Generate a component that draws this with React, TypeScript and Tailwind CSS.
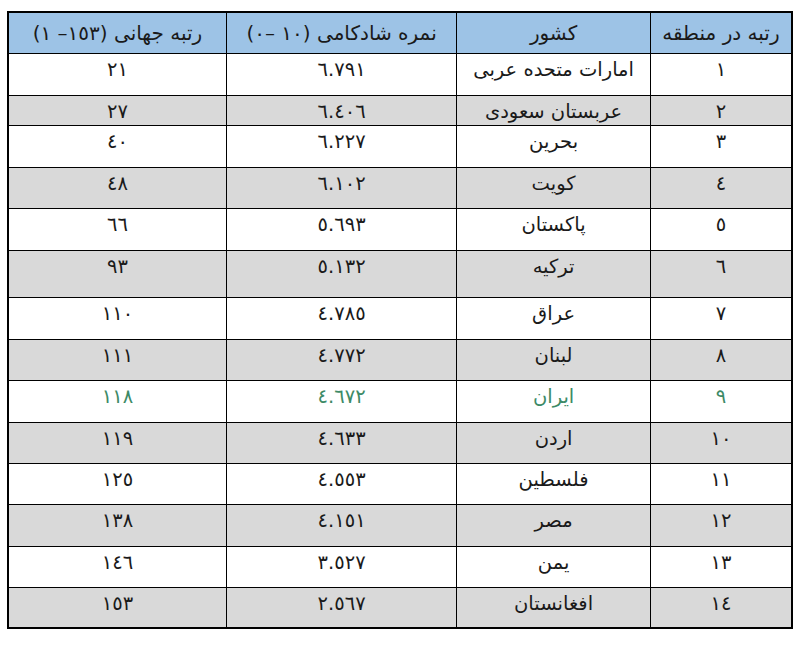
const rows: [string, string, string, string][] = [
  ["١", "امارات متحده عربی", "٦.٧٩١", "٢١"],
  ["٢", "عربستان سعودی", "٦.٤٠٦", "٢٧"],
  ["٣", "بحرین", "٦.٢٢٧", "٤٠"],
  ["٤", "کویت", "٦.١٠٢", "٤٨"],
  ["٥", "پاکستان", "٥.٦٩٣", "٦٦"],
  ["٦", "ترکیه", "٥.١٣٢", "٩٣"],
  ["٧", "عراق", "٤.٧٨٥", "١١٠"],
  ["٨", "لبنان", "٤.٧٧٢", "١١١"],
  ["٩", "ایران", "٤.٦٧٢", "١١٨"],
  ["١٠", "اردن", "٤.٦٣٣", "١١٩"],
  ["١١", "فلسطین", "٤.٥٥٣", "١٢٥"],
  ["١٢", "مصر", "٤.١٥١", "١٣٨"],
  ["١٣", "یمن", "٣.٥٢٧", "١٤٦"],
  ["١٤", "افغانستان", "٢.٥٦٧", "١٥٣"],
];

const heights = [42, 30, 42, 41, 42, 47, 42, 41, 42, 41, 41, 42, 41, 41];

export default function App() {
  return (
    <div className="min-h-[651px] w-[800px] bg-white pl-[7px] pt-[11px]">
      <table
        dir="rtl"
        className="w-[786px] border-collapse border-2 border-black text-[19.5px] leading-[24px] text-[#1a1a1a]"
        style={{ fontFamily: '"DejaVu Sans", "Noto Sans", sans-serif' }}
      >
        <thead>
          <tr className="h-[41px] bg-[#9dc3e6] text-[20px]">
            <th className="w-[142px] border-[1.5px] border-black align-middle font-normal">رتبه در منطقه</th>
            <th className="w-[194px] border-[1.5px] border-black align-middle font-normal">کشور</th>
            <th className="w-[231px] border-[1.5px] border-black align-middle font-normal">نمره شادکامی (١٠ –٠)</th>
            <th className="w-[219px] border-[1.5px] border-black align-middle font-normal">رتبه جهانی (١٥٣– ١)</th>
          </tr>
        </thead>
        <tbody>
          {rows.map((r, i) => {
            const green = r[1] === "ایران";
            return (
              <tr
                key={i}
                className={`${i % 2 === 1 ? "bg-[#d9d9d9]" : "bg-white"} ${green ? "text-[#3d8a66]" : ""}`}
                style={{ height: heights[i] }}
              >
                {r.map((c, j) => (
                  <td key={j} className="border-[1.5px] border-black pt-[4px] text-center align-top">
                    {c}
                  </td>
                ))}
              </tr>
            );
          })}
        </tbody>
      </table>
    </div>
  );
}
